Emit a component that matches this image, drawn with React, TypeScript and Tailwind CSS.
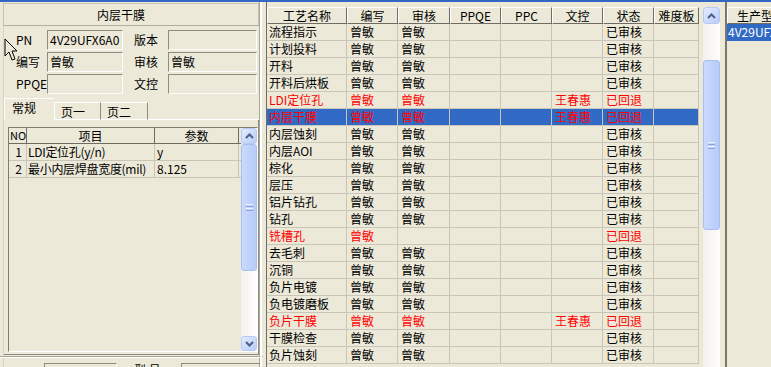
import React from 'react';

type Row = { name: string; a: string; b: string; wk: string; st: string; red?: boolean; sel?: boolean };

const rows: Row[] = [
    { name: '流程指示', a: '曾敏', b: '曾敏', wk: '', st: '已审核' },
    { name: '计划投料', a: '曾敏', b: '曾敏', wk: '', st: '已审核' },
    { name: '开料', a: '曾敏', b: '曾敏', wk: '', st: '已审核' },
    { name: '开料后烘板', a: '曾敏', b: '曾敏', wk: '', st: '已审核' },
    { name: 'LDI定位孔', a: '曾敏', b: '曾敏', wk: '王春惠', st: '已回退', red: true },
    { name: '内层干膜', a: '曾敏', b: '曾敏', wk: '王春惠', st: '已回退', red: true, sel: true },
    { name: '内层蚀刻', a: '曾敏', b: '曾敏', wk: '', st: '已审核' },
    { name: '内层AOI', a: '曾敏', b: '曾敏', wk: '', st: '已审核' },
    { name: '棕化', a: '曾敏', b: '曾敏', wk: '', st: '已审核' },
    { name: '层压', a: '曾敏', b: '曾敏', wk: '', st: '已审核' },
    { name: '铝片钻孔', a: '曾敏', b: '曾敏', wk: '', st: '已审核' },
    { name: '钻孔', a: '曾敏', b: '曾敏', wk: '', st: '已审核' },
    { name: '铣槽孔', a: '曾敏', b: '', wk: '', st: '已回退', red: true },
    { name: '去毛刺', a: '曾敏', b: '曾敏', wk: '', st: '已审核' },
    { name: '沉铜', a: '曾敏', b: '曾敏', wk: '', st: '已审核' },
    { name: '负片电镀', a: '曾敏', b: '曾敏', wk: '', st: '已审核' },
    { name: '负电镀磨板', a: '曾敏', b: '曾敏', wk: '', st: '已审核' },
    { name: '负片干膜', a: '曾敏', b: '曾敏', wk: '王春惠', st: '已回退', red: true },
    { name: '干膜检查', a: '曾敏', b: '曾敏', wk: '', st: '已审核' },
    { name: '负片蚀刻', a: '曾敏', b: '曾敏', wk: '', st: '已审核' },
];

const cols = [
    { label: '工艺名称', w: 'w-[80px]' },
    { label: '编写', w: 'w-[51px]' },
    { label: '审核', w: 'w-[52px]' },
    { label: 'PPQE', w: 'w-[51px]' },
    { label: 'PPC', w: 'w-[51px]' },
    { label: '文控', w: 'w-[51px]' },
    { label: '状态', w: 'w-[51px]' },
    { label: '难度板', w: 'w-[45px]' },
];

const Chevron = ({ up }: { up?: boolean }) => (
    <svg width="9" height="6" viewBox="0 0 9 6">
        <path d={up ? 'M1 5 L4.5 1.5 L8 5' : 'M1 1 L4.5 4.5 L8 1'} fill="none" stroke="#4d6185" strokeWidth="2" />
    </svg>
);

const ScrollBtn = ({ up, h }: { up?: boolean; h: string }) => (
    <div className={`${h} w-full shrink-0 flex items-center justify-center rounded-[3px] border border-[#b7caf5] bg-gradient-to-br from-[#e3ebfe] to-[#b9cdf9]`}>
        <Chevron up={up} />
    </div>
);

const Thumb = ({ h }: { h: string }) => (
    <div className={`${h} w-full shrink-0 flex flex-col items-center justify-center gap-[1px] rounded-[3px] border border-[#a9bef0] bg-gradient-to-r from-[#cadafd] to-[#b7cbf8]`}>
        <div className="w-[7px] h-[1px] bg-[#eef3fe]" />
        <div className="w-[7px] h-[1px] bg-[#8ca3d8]" />
        <div className="w-[7px] h-[1px] bg-[#eef3fe]" />
        <div className="w-[7px] h-[1px] bg-[#8ca3d8]" />
    </div>
);

const Field = ({ value, w }: { value?: string; w: string }) => (
    <div className={`${w} shrink-0 h-[20px] border border-t-[#8e8b7f] border-l-[#8e8b7f] border-b-[#fdfdfb] border-r-[#fdfdfb] pl-[2px] leading-[18px] whitespace-nowrap overflow-hidden`}>
        {value}
    </div>
);

export default function App() {
    return (
        <div className="relative w-[771px] h-[367px] overflow-hidden bg-[#ece9d8] text-black text-[12px] font-['Noto_Sans_CJK_SC',sans-serif]">
            <div className="h-[2px] bg-[#3466c4]" />
            <div className="flex h-[365px]">
                {/* left panel */}
                <div className="w-[260px] shrink-0 border-r border-[#a9a593] flex flex-col pl-[3px]">
                    <div className="mt-[1px] h-[23px] w-[256px] border border-[#c6c2b0] border-b-[#b3af9c] pl-[93px] leading-[21px]">
                        内层干膜
                    </div>
                    <div className="border-l border-[#d8d4c4] flex flex-col">
                        <div className="mt-[4px] flex flex-col gap-[2px]">
                            {[
                                ['PN', '4V29UFX6A0', '版本', ''],
                                ['编写', '曾敏', '审核', '曾敏'],
                                ['PPQE', '', '文控', ''],
                            ].map(([l1, v1, l2, v2]) => (
                                <div key={l1} className="flex items-center h-[20px]">
                                    <div className="w-[43px] shrink-0 pl-[12px] leading-[20px]">{l1}</div>
                                    <Field value={v1} w="w-[76px]" />
                                    <div className="w-[45px] shrink-0 pl-[11px] leading-[20px]">{l2}</div>
                                    <Field value={v2} w="w-[89px]" />
                                </div>
                            ))}
                        </div>
                        {/* tabs */}
                        <div className="mt-[4px] h-[22px] flex items-end">
                            <div className="w-[50px] h-[22px] pl-[7px] leading-[18px] border-t border-l border-white">常规</div>
                            <div className="w-[47px] h-[18px] pl-[6px] leading-[17px] border-t border-l border-white border-r border-r-[#8e8b7f] border-b border-b-white">页一</div>
                            <div className="w-[47px] h-[18px] pl-[6px] leading-[17px] border-t border-white border-r border-r-[#8e8b7f] border-b border-b-white">页二</div>
                            <div className="flex-1 h-[1px] bg-white" />
                        </div>
                        {/* tab panel */}
                        <div className="h-[235px] border-r border-b border-[#8e8b7f] pt-[7px] pl-[4px] pr-[1px]">
                            <div className="h-[225px] w-[250px] border border-t-[#7f7d73] border-l-[#7f7d73] border-b-white border-r-white flex">
                                <div className="w-[232px] shrink-0 flex flex-col">
                                    <div className="h-[16px] flex border-b border-[#6e6c63] leading-[15px]">
                                        <div className="w-[18px] border-r border-[#6e6c63] pl-[1px] text-[11px]">NO</div>
                                        <div className="w-[128px] border-r border-[#6e6c63] text-center">项目</div>
                                        <div className="w-[84px] border-r border-[#6e6c63] text-center">参数</div>
                                    </div>
                                    {[
                                        ['1', 'LDI定位孔(y/n)', 'y'],
                                        ['2', '最小内层焊盘宽度(mil)', '8.125'],
                                    ].map(([n, p, v]) => (
                                        <div key={n} className="h-[17px] flex border-b border-[#c9c6b8] leading-[16px]">
                                            <div className="w-[18px] border-r border-[#c9c6b8] text-right pr-[4px]">{n}</div>
                                            <div className="w-[128px] border-r border-[#c9c6b8] pl-[1px] whitespace-nowrap overflow-hidden tracking-[-0.3px]">{p}</div>
                                            <div className="w-[84px] border-r border-[#c9c6b8] pl-[2px]">{v}</div>
                                        </div>
                                    ))}
                                </div>
                                <div className="ml-auto w-[16px] shrink-0 flex flex-col bg-gradient-to-r from-[#f3f1ec] to-[#fefefe]">
                                    <ScrollBtn up h="h-[16px]" />
                                    <Thumb h="h-[127px]" />
                                    <div className="flex-1" />
                                    <ScrollBtn h="h-[15px]" />
                                </div>
                            </div>
                        </div>
                        <div className="mt-[1px] h-[2px] border-t border-[#a9a593] border-b border-b-white -ml-[4px] w-[263px]" />
                        <div className="mt-[5px] flex items-start">
                            <div className="w-[40px] shrink-0" />
                            <Field w="w-[73px]" />
                            <div className="w-[64px] shrink-0 pl-[17px] leading-[14px]">型 号</div>
                            <Field w="w-[80px]" />
                        </div>
                    </div>
                </div>
                <div className="w-[2px] shrink-0 bg-white" />
                <div className="w-[4px] shrink-0" />
                {/* right grid */}
                <div className="w-[456px] shrink-0 border-l border-l-[#6e6c63] flex pt-[5px]">
                    <div className="w-[432px] shrink-0 flex flex-col">
                        <div className="h-[17px] flex">
                            {cols.map((c) => (
                                <div key={c.label} className={`${c.w} shrink-0 h-[17px] border-t border-l border-white border-r border-r-[#6e6c63] border-b border-b-[#6e6c63] text-center leading-[15px] whitespace-nowrap`}>
                                    {c.label}
                                </div>
                            ))}
                        </div>
                        {rows.map((r) => {
                            const tc = r.red ? 'text-[#ff0000]' : 'text-black';
                            const bg = r.sel ? 'bg-[#316ac5]' : '';
                            const cell = `shrink-0 h-[17px] border-r border-b border-[#c9c6b8] pl-[2px] leading-[16px] whitespace-nowrap overflow-hidden`;
                            return (
                                <div key={r.name} className={`flex shrink-0 h-[17px] ${bg}`}>
                                    <div className={`w-[80px] ${cell} ${tc}`}>{r.name}</div>
                                    <div className={`w-[51px] ${cell} ${tc} pl-[3px]`}>{r.a}</div>
                                    <div className={`w-[52px] ${cell} ${tc} pl-[3px]`}>{r.b}</div>
                                    <div className={`w-[51px] ${cell}`} />
                                    <div className={`w-[51px] ${cell}`} />
                                    <div className={`w-[51px] ${cell} text-[#ff0000] pl-[3px]`}>{r.wk}</div>
                                    <div className={`w-[51px] ${cell} ${r.st === '已回退' ? 'text-[#ff0000]' : 'text-black'} pl-[3px]`}>{r.st}</div>
                                    <div className={`w-[45px] ${cell}`} />
                                </div>
                            );
                        })}
                    </div>
                    <div className="ml-[4px] w-[17px] shrink-0 flex flex-col bg-gradient-to-r from-[#f3f1ec] to-[#fefefe]">
                        <ScrollBtn up h="h-[17px]" />
                        <div className="h-[36px] shrink-0" />
                        <Thumb h="h-[170px]" />
                    </div>
                </div>
                {/* right panel */}
                <div className="ml-[3px] flex-1 min-w-0 overflow-hidden border-l-2 border-l-[#7a786e] pt-[5px] flex flex-col">
                    <div className="h-[17px] border-t border-l border-white border-b border-b-[#6e6c63] pl-[9px] leading-[15px] whitespace-nowrap">生产型号</div>
                    <div className="h-[17px] bg-[#316ac5] text-white pl-[1px] leading-[16px] whitespace-nowrap overflow-hidden">4V29UFX6A0</div>
                </div>
            </div>
            {/* mouse cursor */}
            <svg className="absolute left-[4px] top-[38px]" width="14" height="24" viewBox="0 0 14 24">
                <path d="M1 1 L1 18 L5 14 L8 22 L11 21 L8 13 L13 13 Z" fill="none" stroke="#000" strokeWidth="1" />
            </svg>
        </div>
    );
}
